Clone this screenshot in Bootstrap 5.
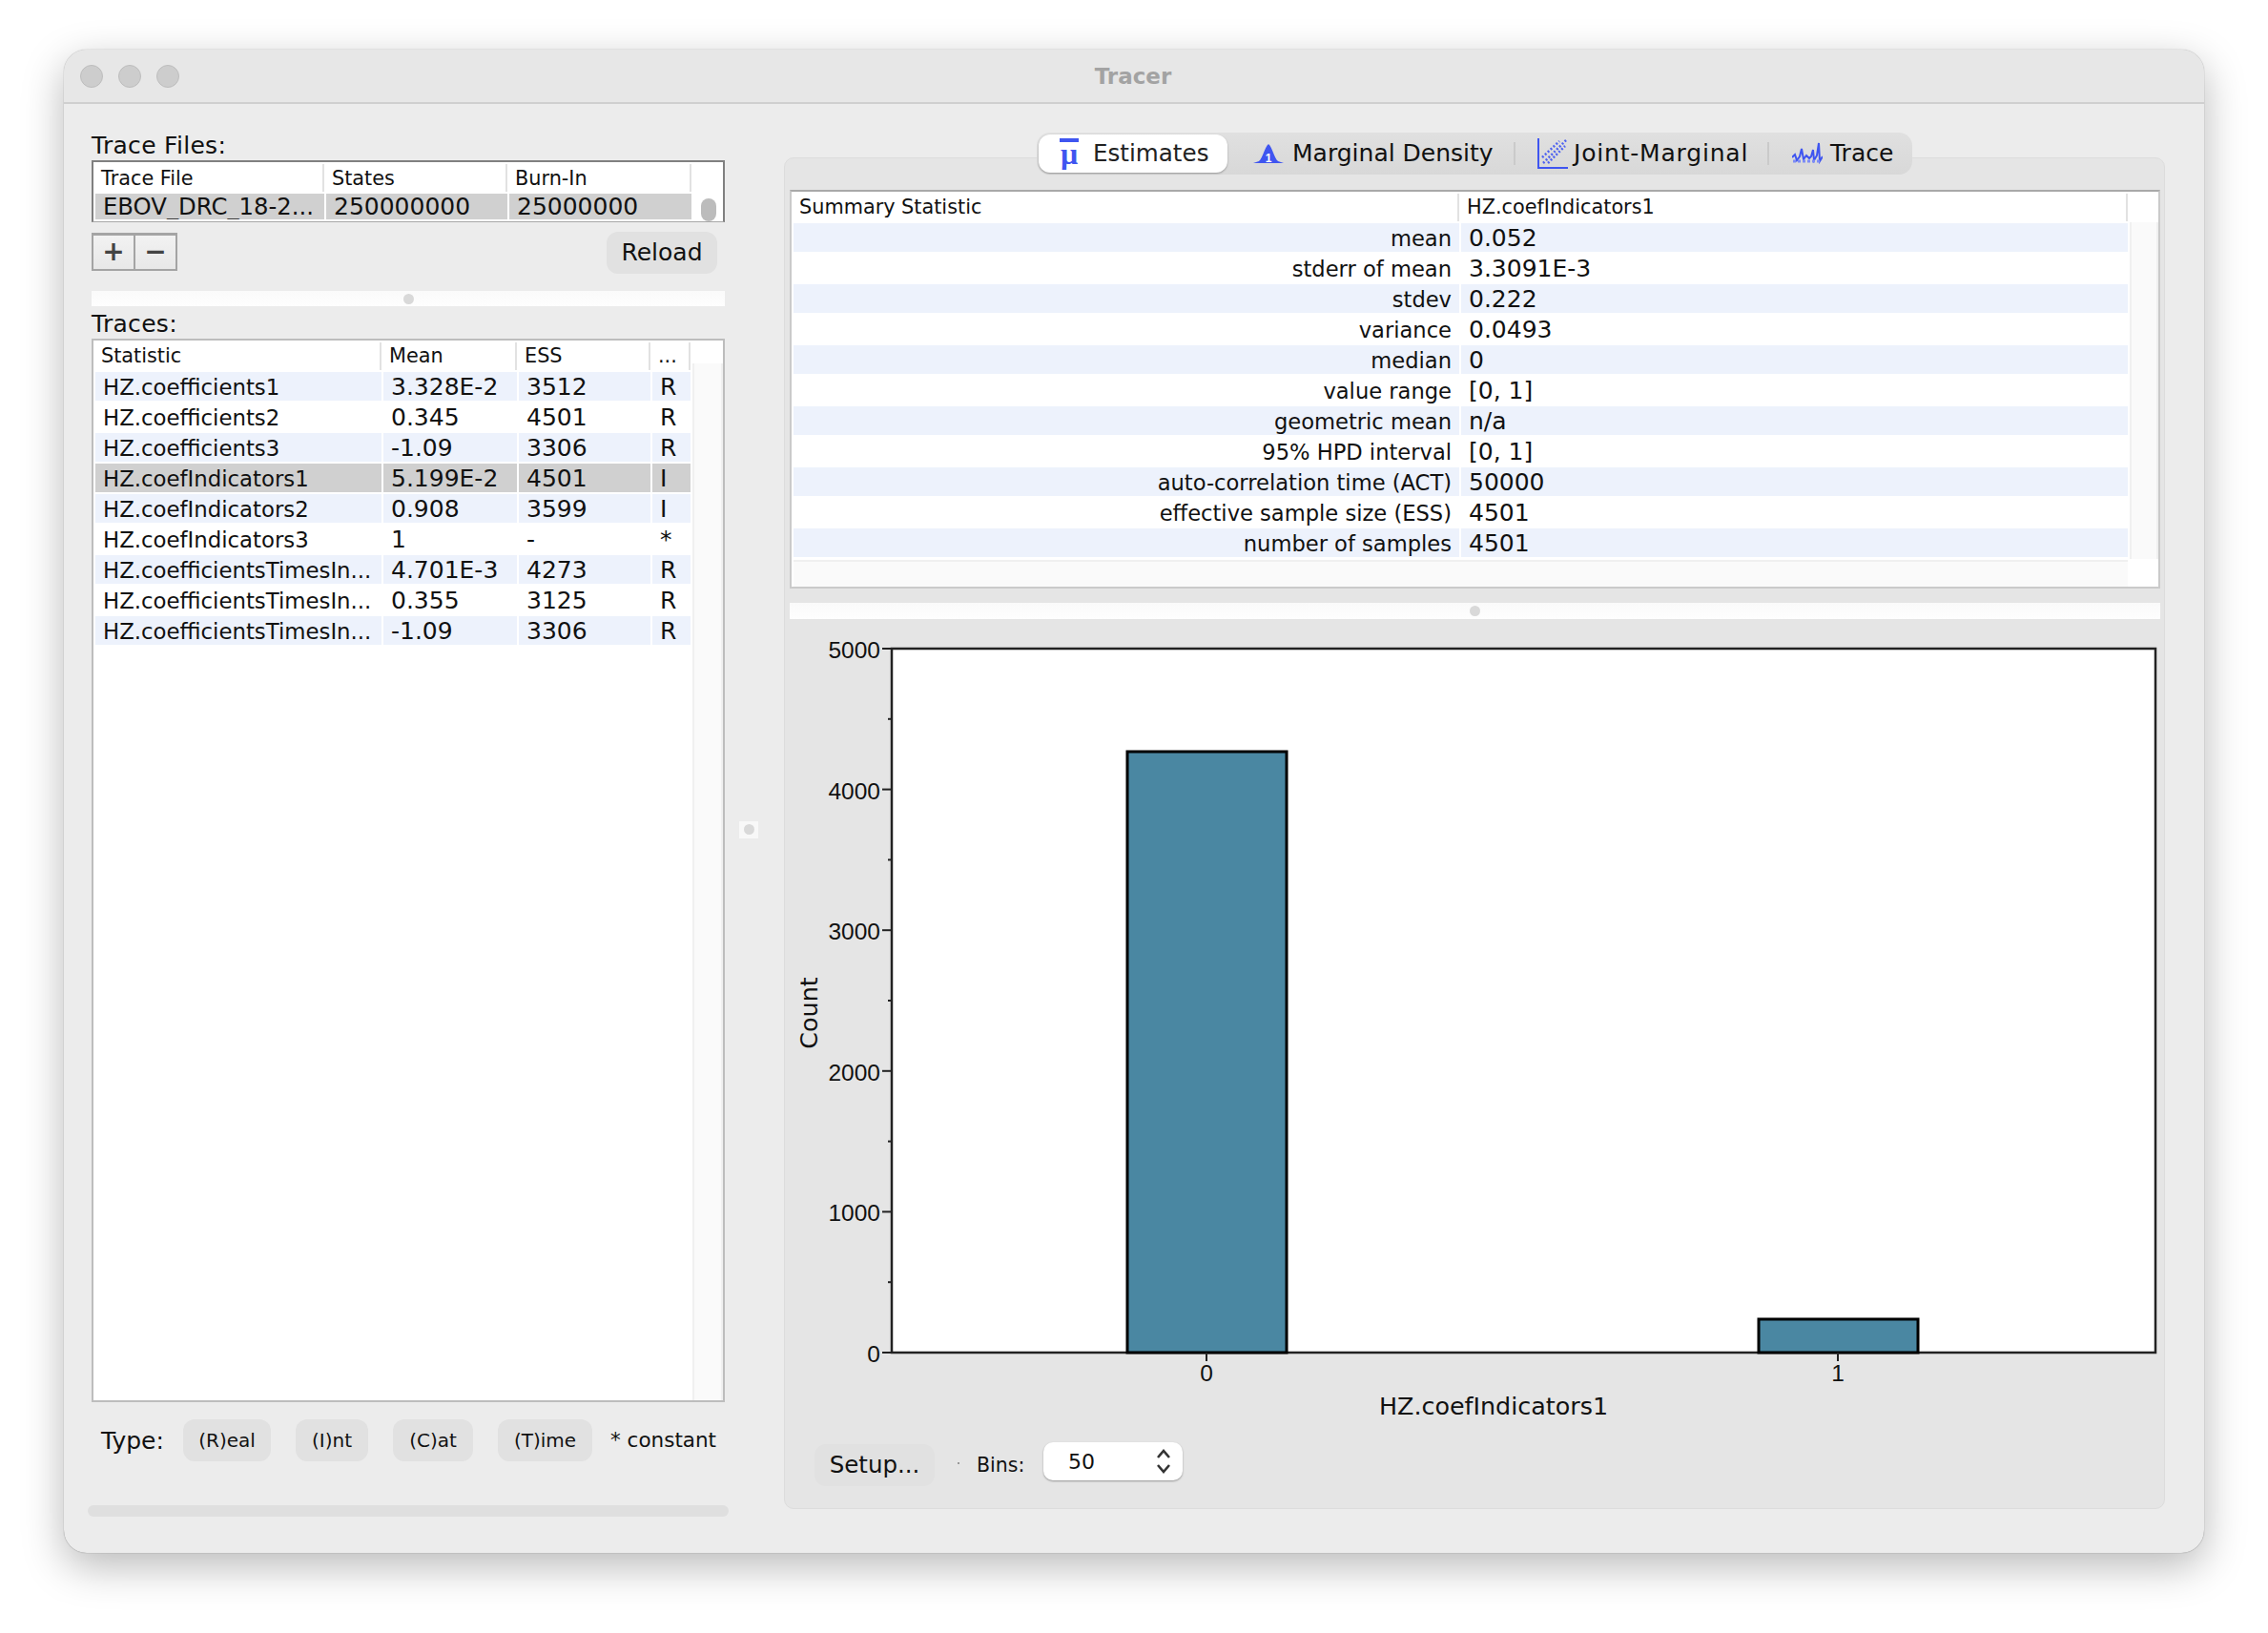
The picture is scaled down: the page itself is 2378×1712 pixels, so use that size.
<!DOCTYPE html>
<html lang="en">
<head>
<meta charset="UTF-8">
<meta name="viewport" content="width=device-width, initial-scale=1.0">
<title>Tracer</title>
<link href="https://cdn.jsdelivr.net/npm/bootstrap@5.3.0/dist/css/bootstrap.min.css" rel="stylesheet">
<style>
    body { background: #fff; font-family: "DejaVu Sans", "Liberation Sans", sans-serif; font-size: 24px; color: #111; }
    .desk { padding: 52px 67px 0; height: 1712px; background: #fff; }
    .app-window { width: 2244px; height: 1576px; background: #ececec; border-radius: 24px; overflow: hidden; box-shadow: 0 0 1px rgba(0,0,0,.5), 0 14px 44px rgba(0,0,0,.28); }
    .title-bar { height: 57px; background: #e7e7e7; border-bottom: 2px solid #cfcfcf; padding-left: 17px; }
    .light { width: 24px; height: 24px; border-radius: 50%; background: #cdcdcd; border: 1px solid #bdbdbd; }
    .lights-gap { gap: 16px; }
    .title-text { font-weight: 700; font-size: 23px; color: #a3a3a3; }
    .title-slot { width: 2000px; }

    .left-col { width: 664px; margin-left: 29px; padding-top: 29px; }
    .pane-label { height: 30px; line-height: 30px; letter-spacing: .3px; font-size: 25px; }
    .grid-frame { background: #fff; border: 2px solid #bdbdbd; overflow: hidden; }
    .files-frame { height: 65px; border-color: #808080; border-bottom: 1px solid #a8a8a8; }
    .traces-frame { height: 1115px; }
    .stats-frame { height: 418px; border-color: #cacaca; border-top-color: #a9a9a9; }

    .data-grid { border-collapse: separate; border-spacing: 2px; table-layout: fixed; font-size: 25px; }
    .data-grid th { font-weight: 400; font-size: 20.8px; height: 29px; line-height: 25px; padding: 0 0 1px 6px; border-right: 2px solid #e2e2e2; white-space: nowrap; }
    .data-grid td { height: 30px; line-height: 28px; padding: 2px 0 0 8px; white-space: nowrap; overflow: hidden; }
    .data-grid td:first-child { font-size: 22.8px; }
    .files-frame .data-grid th { padding-top: 1px; padding-bottom: 0; }
    .files-frame .data-grid td { height: 27px; line-height: 26px; padding-top: 1px; }
    .files-frame .data-grid td:first-child { font-size: 24.3px; }
    .data-grid tbody tr:nth-child(odd) td { background: #edf2fc; }
    .data-grid tbody tr.row-picked td { background: #d0d0d0; }
    .data-grid td.cell-end { text-align: right; padding: 2px 8px 0 0; font-size: 22.6px; }
    .track { background: #fafafa; border-left: 2px solid #f0f0f0; border-right: 2px solid #f0f0f0; }
    .thumb { width: 16px; height: 24px; border-radius: 8px; background: #bcbcbc; }

    .add-remove { width: 90px; height: 40px; margin-top: 1px; border: 2px solid #a4a4a4; border-top-width: 3px; background: linear-gradient(#f2f2f2, #e8e8e8); }
    .add-remove > span { flex: 1 1 0; line-height: 34px; text-align: center; font-weight: 700; font-size: 28px; color: #444; }
    .add-remove > span + span { border-left: 2px solid #a4a4a4; }
    .act-btn { background: #e1e1e1; border: 0; border-radius: 12px; color: #111; padding: 0; height: 44px; font-size: 25px; line-height: 44px; text-align: center; }
    .act-btn:hover { background: #dcdcdc; color: #111; }
    .act-small { font-size: 20px; }
    .reload-btn { width: 116px; margin-right: 8px; }
    .controls-row { height: 43px; margin-top: 10px; }
    .splitter { background: linear-gradient(#fafafa, #fefefe); height: 16px; }
    .grip { width: 11px; height: 11px; border-radius: 50%; background: #d9d9d9; }
    .left-splitter { margin-top: 19px; margin-bottom: 4px; }
    .type-row { height: 44px; margin-top: 18px; padding-left: 10px; }
    .type-row .act-btn { margin-right: 26px; }
    .type-note { font-size: 21.5px; margin-left: -7px; margin-top: 6px; }
    .type-label { width: 86px; margin-top: 4px; font-size: 25px; }
    .h-scroll { height: 12px; margin: 46px -4px 0; background: #dfdfdf; border-radius: 6px; }

    .gap-col { width: 62px; height: 1521px; }
    .gap-grip { width: 20px; height: 18px; background: #f8f8f8; margin-right: 12px; }

    .right-col { width: 1448px; padding-top: 30px; }
    .tab-wrap { height: 44px; margin-bottom: -18px; position: relative; z-index: 1; }
    .tab-group { width: 918px; height: 44px; background: linear-gradient(#e0e0e0, #d8d8d8); border-radius: 14px; padding: 2px 0 2px 2px; flex-wrap: nowrap; }
    .tab-group .nav-link { height: 40px; padding: 0; border-radius: 12px; color: #111; font-size: 25px; display: flex; align-items: center; white-space: nowrap; }
    .tab-group .nav-link.active { background: #fff; color: #222; box-shadow: 0 1px 2px rgba(0,0,0,.3); }
    .tab-a { width: 198px; padding-left: 22px !important; gap: 15px; font-size: 24.6px !important; }
    .tab-b { width: 302px; padding-left: 27px !important; gap: 9px; border-right: 2px solid #cacaca !important; border-radius: 0 !important; }
    .tab-c { width: 266px; padding-left: 23px !important; gap: 6px; border-right: 2px solid #cacaca !important; border-radius: 0 !important; letter-spacing: .8px; }
    .tab-d { width: 150px; padding-left: 24px !important; gap: 8px; }
    .tab-b, .tab-c { height: 24px !important; margin-top: 8px; }

    .right-panel { height: 1417px; background: #e5e5e5; border: 1px solid #dcdcdc; border-radius: 10px; padding: 33px 4px 0 5px; }
    .stats-track { width: 32px; margin-top: 32px; height: 353px; }
    .stats-strip { height: 28px; background: #fafafa; border-top: 2px solid #f0f0f0; margin: 1px 32px 0 2px; }
    .right-splitter { margin-top: 15px; height: 17px; }
    .chart-box { display: block; }
    .chart-box text { font-family: "Liberation Sans", sans-serif; font-size: 24.5px; fill: #111; }
    .chart-box text.axis-name { font-family: "DejaVu Sans", sans-serif; font-size: 25.4px; }
    .bottom-row { margin-top: 12px; padding-left: 26px; }
    .setup-btn { width: 126px; margin-top: 2px; font-size: 24.5px; }
    .tiny-dot { width: 2px; height: 2px; background: #999; margin: 21px 18px 0 24px; }
    .bins-label { font-size: 20.5px; width: 70px; line-height: 48px; }
    .bins-spin { width: 146px; height: 40px; background: #fff; border-radius: 10px; box-shadow: 0 1px 2px rgba(0,0,0,.35); padding: 0 12px 0 26px; font-size: 22px; }
</style>
</head>
<body>
<div class="desk">
  <div class="app-window d-flex flex-column">

    <!-- title bar -->
    <div class="title-bar d-flex align-items-center flex-shrink-0">
      <div class="d-flex lights-gap">
        <div class="light"></div>
        <div class="light"></div>
        <div class="light"></div>
      </div>
      <div class="title-slot text-center"><span class="title-text">Tracer</span></div>
    </div>

    <div class="d-flex">
      <!-- left side -->
      <div class="left-col flex-shrink-0">
        <div class="pane-label">Trace Files:</div>
        <div class="grid-frame files-frame d-flex">
          <table class="data-grid align-self-start" style="width:629px">
            <colgroup><col style="width:240px"><col style="width:190px"><col style="width:191px"></colgroup>
            <thead><tr><th>Trace File</th><th>States</th><th>Burn-In</th></tr></thead>
            <tbody><tr class="row-picked"><td>EBOV_DRC_18-2...</td><td>250000000</td><td>25000000</td></tr></tbody>
          </table>
          <div class="flex-grow-1 d-flex justify-content-center align-items-end"><div class="thumb"></div></div>
        </div>
        <div class="controls-row d-flex justify-content-between">
          <div class="add-remove d-flex"><span>+</span><span>−</span></div>
          <button class="btn act-btn reload-btn" type="button">Reload</button>
        </div>
        <div class="splitter left-splitter d-flex justify-content-center align-items-center"><div class="grip"></div></div>
        <div class="pane-label">Traces:</div>
        <div class="grid-frame traces-frame d-flex">
          <table class="data-grid align-self-start" style="width:628px">
            <colgroup><col style="width:300px"><col style="width:140px"><col style="width:138px"><col style="width:40px"></colgroup>
            <thead><tr><th>Statistic</th><th>Mean</th><th>ESS</th><th>...</th></tr></thead>
            <tbody id="traceRows"></tbody>
          </table>
          <div class="track flex-grow-1 mt-4"></div>
        </div>
        <div class="type-row d-flex">
          <div class="type-label">Type:</div>
          <button class="btn act-btn act-small" type="button" style="width:92px">(R)eal</button>
          <button class="btn act-btn act-small" type="button" style="width:76px">(I)nt</button>
          <button class="btn act-btn act-small" type="button" style="width:84px">(C)at</button>
          <button class="btn act-btn act-small" type="button" style="width:99px">(T)ime</button>
          <div class="type-note">* constant</div>
        </div>
        <div class="h-scroll"></div>
      </div>

      <!-- splitter between the two sides -->
      <div class="gap-col flex-shrink-0 d-flex justify-content-center align-items-center">
        <div class="gap-grip d-flex justify-content-center align-items-center"><div class="grip"></div></div>
      </div>

      <!-- right side -->
      <div class="right-col flex-shrink-0">
        <div class="tab-wrap d-flex justify-content-center">
          <ul class="nav tab-group">
            <li class="nav-item"><a class="nav-link active tab-a" href="#">
              <svg width="20" height="34" viewBox="0 0 20 34"><rect x="0" y="1" width="20" height="4" fill="#3f55f0"/><text x="10" y="28" text-anchor="middle" font-family="Liberation Serif, serif" font-size="32" font-weight="700" fill="#3f55f0">μ</text></svg>
              Estimates</a></li>
            <li class="nav-item"><a class="nav-link tab-b" href="#">
              <svg width="32" height="22" viewBox="0 0 32 22"><path d="M0 21 L6 19 C10 16 12 4 16 1 C20 4 22 16 26 19 L32 21 Z" fill="#3f55f0"/><text x="16" y="20" text-anchor="middle" font-family="Liberation Sans, sans-serif" font-size="12" font-weight="700" fill="#fff">1</text></svg>
              Marginal Density</a></li>
            <li class="nav-item"><a class="nav-link tab-c" href="#">
              <svg width="32" height="32" viewBox="0 0 32 32"><path d="M1 0 V31 H32" fill="none" stroke="#3f55f0" stroke-width="2"/><path d="M6 26 L30 2 M11 26 L29 8 M5 20 L23 3" fill="none" stroke="#4f63f0" stroke-width="2.5" stroke-dasharray="2 2"/></svg>
              Joint-Marginal</a></li>
            <li class="nav-item"><a class="nav-link tab-d" href="#">
              <svg width="32" height="26" viewBox="0 0 32 26"><path d="M0 17 L3 14 L5 20 L8 16 L10 8 L12 19 L15 15 L18 18 L20 16 L22 9 L23 20 L26 15 L28 2 L29 21 L32 16" fill="none" stroke="#3f55f0" stroke-width="2"/><path d="M1 21 H31" stroke="#7d8cf5" stroke-width="3" stroke-dasharray="3 2"/></svg>
              Trace</a></li>
          </ul>
        </div>

        <div class="right-panel">
          <div class="grid-frame stats-frame">
            <div class="d-flex">
              <table class="data-grid" style="width:1403px">
                <colgroup><col style="width:698px"><col style="width:699px"></colgroup>
                <thead><tr><th>Summary Statistic</th><th>HZ.coefIndicators1</th></tr></thead>
                <tbody id="statRows"></tbody>
              </table>
              <div class="track stats-track"></div>
            </div>
            <div class="stats-strip"></div>
          </div>
          <div class="splitter right-splitter d-flex justify-content-center align-items-center"><div class="grip"></div></div>

          <svg class="chart-box" id="chart" width="1439" height="851" viewBox="828 649 1439 851"></svg>

          <div class="bottom-row d-flex align-items-start">
            <button class="btn act-btn setup-btn" type="button">Setup...</button>
            <div class="tiny-dot"></div>
            <div class="bins-label">Bins:</div>
            <div class="bins-spin d-flex align-items-center justify-content-between">
              <span>50</span>
              <svg width="16" height="28" viewBox="0 0 16 28"><path d="M2 10 L8 3 L14 10 M2 18 L8 25 L14 18" fill="none" stroke="#333" stroke-width="2.6"/></svg>
            </div>
          </div>
        </div>
      </div>
    </div>
  </div>
</div>

<script src="https://cdn.jsdelivr.net/npm/bootstrap@5.3.0/dist/js/bootstrap.bundle.min.js"></script>
<script>
// table rows
const traces = [
    ['HZ.coefficients1', '3.328E-2', '3512', 'R'],
    ['HZ.coefficients2', '0.345', '4501', 'R'],
    ['HZ.coefficients3', '-1.09', '3306', 'R'],
    ['HZ.coefIndicators1', '5.199E-2', '4501', 'I'],
    ['HZ.coefIndicators2', '0.908', '3599', 'I'],
    ['HZ.coefIndicators3', '1', '-', '*'],
    ['HZ.coefficientsTimesIn...', '4.701E-3', '4273', 'R'],
    ['HZ.coefficientsTimesIn...', '0.355', '3125', 'R'],
    ['HZ.coefficientsTimesIn...', '-1.09', '3306', 'R']
];
const stats = [
    ['mean', '0.052'],
    ['stderr of mean', '3.3091E-3'],
    ['stdev', '0.222'],
    ['variance', '0.0493'],
    ['median', '0'],
    ['value range', '[0, 1]'],
    ['geometric mean', 'n/a'],
    ['95% HPD interval', '[0, 1]'],
    ['auto-correlation time (ACT)', '50000'],
    ['effective sample size (ESS)', '4501'],
    ['number of samples', '4501']
];

document.getElementById('traceRows').innerHTML = traces.map((r, i) =>
    '<tr' + (i === 3 ? ' class="row-picked"' : '') + '>' + r.map(c => '<td>' + c + '</td>').join('') + '</tr>').join('');
document.getElementById('statRows').innerHTML = stats.map(r =>
    '<tr><td class="cell-end">' + r[0] + '</td><td>' + r[1] + '</td></tr>').join('');

// histogram
const yOf = v => 1418 - v * 738 / 5000;
let s = '<rect x="935" y="680" width="1325" height="738" fill="#fff" stroke="#222" stroke-width="2.5"/>';
for (let v = 0; v <= 5000; v += 500) {
    const major = v % 1000 === 0;
    s += '<line x1="' + (major ? 925 : 931) + '" x2="935" y1="' + yOf(v) + '" y2="' + yOf(v) + '" stroke="#222" stroke-width="2"/>';
    if (major) s += '<text x="923" y="' + (yOf(v) + 10) + '" text-anchor="end">' + v + '</text>';
}
s += '<rect x="1182" y="788" width="167" height="630" fill="#4a87a2" stroke="#000" stroke-width="3"/>';
s += '<rect x="1844" y="1383" width="167" height="35" fill="#4a87a2" stroke="#000" stroke-width="3"/>';
[[1265, '0'], [1927, '1']].forEach(t => {
    s += '<line x1="' + t[0] + '" x2="' + t[0] + '" y1="1418" y2="1427" stroke="#222" stroke-width="2"/>';
    s += '<text x="' + t[0] + '" y="1448" text-anchor="middle">' + t[1] + '</text>';
});
s += '<text class="axis-name" x="1566" y="1483" text-anchor="middle">HZ.coefIndicators1</text>';
s += '<text class="axis-name" transform="translate(857 1062) rotate(-90)" text-anchor="middle">Count</text>';
document.getElementById('chart').innerHTML = s;
</script>
</body>
</html>
